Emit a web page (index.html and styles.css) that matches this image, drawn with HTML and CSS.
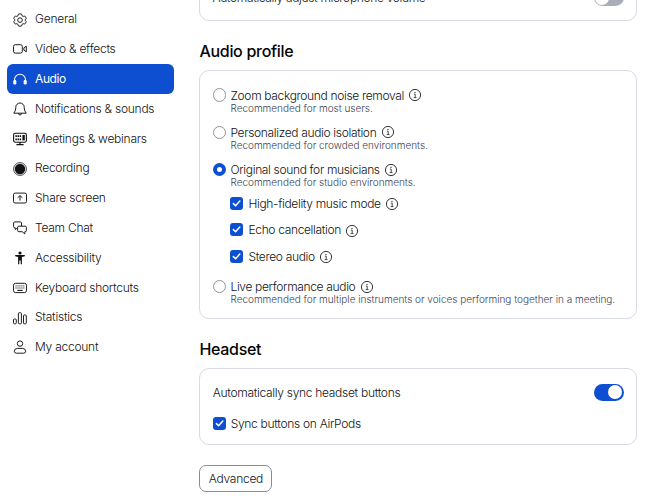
FILE: index.html
```html
<!DOCTYPE html>
<html lang="en">
<head>
<meta charset="utf-8">
<title>Settings - Audio</title>
<link rel="stylesheet" href="styles.css">
</head>
<body>
<svg class="defs" width="0" height="0" aria-hidden="true">
  <symbol id="info" viewBox="0 0 12 12"><circle cx="6" cy="6" r="5.6" fill="none" stroke="currentColor" stroke-width=".85"/><path d="M4.9 5.1h1.3v3.4M4.7 8.6h2.8" fill="none" stroke="currentColor" stroke-width=".75"/><circle cx="6" cy="3.3" r=".65" fill="currentColor"/></symbol>
  <symbol id="check" viewBox="0 0 13 13"><path d="M3.4 6.6 5.6 8.8 9.8 4.1" fill="none" stroke="#fff" stroke-width="1.5" stroke-linecap="round" stroke-linejoin="round"/></symbol>
</svg>
<div class="app">
  <nav class="sidebar">
    <a class="item"><svg class="icon" viewBox="0 0 14 14"><path d="M5.4 1.2Q7 .4 8.6 1.2L9 2.7 10.2 3.4 11.7 3Q13 4 13.2 5.7L12.1 6.9V7.3L13.2 8.4Q12.8 10.1 11.6 11.1L10.2 10.7 9 11.4 8.6 12.9Q7 13.6 5.4 12.9L5 11.4 3.8 10.7 2.4 11.1Q1.1 10 .8 8.4L1.9 7.3V6.8L.8 5.7Q1.1 4 2.4 3L3.8 3.4 5 2.7Z"/><circle cx="7" cy="7.1" r="2.3"/></svg><span>General</span></a>
    <a class="item"><svg class="icon" viewBox="0 0 14 14"><rect x=".5" y="2.7" width="8.8" height="8.4" rx="1.8"/><path d="M10.9 5.8 13.3 4.2V9.8L10.9 8.2Z"/></svg><span>Video &amp; effects</span></a>
    <a class="item active"><svg class="icon" viewBox="0 0 14 14"><path d="M1.5 10V7.7a5.5 5.5 0 0 1 11 0V10" stroke-width="1.1"/><rect x=".3" y="8" width="3" height="4.6" rx="1.3" class="solid"/><rect x="10.7" y="8" width="3" height="4.6" rx="1.3" class="solid"/></svg><span>Audio</span></a>
    <a class="item"><svg class="icon" viewBox="0 0 14 14"><path d="M.8 11.2Q2.7 9 2.8 6V5.2a4.2 4.2 0 0 1 8.4 0V6q.1 3 2 5.2ZM5.2 11.3q.4 1.7 1.8 1.7t1.8-1.7"/></svg><span>Notifications &amp; sounds</span></a>
    <a class="item"><svg class="icon" viewBox="0 0 14 14"><rect x=".6" y="1.3" width="12.8" height="8.9" rx="1.6" stroke-width="1.1"/><path d="M2.4 4.1H8.2M2.4 7.3H8.2" stroke-width="1.7" stroke-dasharray="1.5 .6"/><path d="M10.6 3v5.4" stroke-width="2.4"/><path d="M7 10v2.2M3.4 12.7h7.2" stroke-width="1.2"/></svg><span>Meetings &amp; webinars</span></a>
    <a class="item"><svg class="icon" viewBox="0 0 14 14"><circle cx="7" cy="7" r="6.4" stroke-width=".8"/><circle cx="7" cy="7" r="5.2" class="solid"/></svg><span>Recording</span></a>
    <a class="item"><svg class="icon" viewBox="0 0 14 14"><rect x=".5" y="2.1" width="13" height="9.9" rx="1.6"/><path d="M7 9.6V4.8M4.6 6.8 7 4.6 9.4 6.8"/></svg><span>Share screen</span></a>
    <a class="item"><svg class="icon" viewBox="0 0 14 14"><path d="M4.5 6.9 2.3 8.5V6.8H1.8Q.6 6.8.6 5.6V2Q.6.9 1.8.9H7.3Q8.5.9 8.5 2V5.2M5.8 5.2H12.2Q13.4 5.2 13.4 6.4V9.5Q13.4 10.7 12.2 10.7H11.8V12.9L9.2 10.7H5.8Q4.6 10.7 4.6 9.5V6.4Q4.6 5.2 5.8 5.2Z"/></svg><span>Team Chat</span></a>
    <a class="item"><svg class="icon" viewBox="0 0 14 14"><circle cx="7" cy="2" r="1.6" class="solid"/><path class="solid" d="M2.2 4.1H11.8V5.3L8.9 5.9V13.2H7.7V9.5H6.3V13.2H5.1V5.9L2.2 5.3Z"/></svg><span>Accessibility</span></a>
    <a class="item"><svg class="icon" viewBox="0 0 14 14"><rect x=".5" y="2.3" width="13" height="9.3" rx="2"/><path d="M2.5 4.9h9M2.5 7h9" stroke-dasharray="1.1 .85"/><path d="M4.4 9.4h5.2" stroke-width="1.1"/></svg><span>Keyboard shortcuts</span></a>
    <a class="item"><svg class="icon" viewBox="0 0 14 14"><rect x=".5" y="8" width="2.8" height="4.8" rx=".9"/><rect x="5.4" y="1.7" width="3" height="11.1" rx=".9"/><rect x="10.5" y="4" width="2.8" height="8.8" rx=".9"/></svg><span>Statistics</span></a>
    <a class="item"><svg class="icon" viewBox="0 0 14 14"><circle cx="7" cy="3.6" r="2.7"/><path d="M1.3 11.2Q1.5 8.4 4.5 8.4H9.5Q12.5 8.4 12.7 11.2 12.6 13.2 10.7 13.2H3.3Q1.4 13.2 1.3 11.2Z"/></svg><span>My account</span></a>
  </nav>
  <main class="content">
    <section class="card card-mic">
      <span>Automatically adjust microphone volume</span><span class="toggle off"></span>
    </section>
    <h2 class="title">Audio profile</h2>
    <section class="card card-profile">
      <div class="option">
        <i class="radio"></i>
        <div><div class="label"><span>Zoom background noise removal</span><svg class="info"><use href="#info"/></svg></div><p class="hint">Recommended for most users.</p></div>
      </div>
      <div class="option">
        <i class="radio"></i>
        <div><div class="label"><span>Personalized audio isolation</span><svg class="info"><use href="#info"/></svg></div><p class="hint">Recommended for crowded environments.</p></div>
      </div>
      <div class="option music">
        <i class="radio selected"></i>
        <div>
          <div class="label"><span>Original sound for musicians</span><svg class="info"><use href="#info"/></svg></div><p class="hint">Recommended for studio environments.</p>
          <div class="sub"><svg class="check"><use href="#check"/></svg><span>High-fidelity music mode</span><svg class="info"><use href="#info"/></svg></div>
          <div class="sub"><svg class="check"><use href="#check"/></svg><span>Echo cancellation</span><svg class="info"><use href="#info"/></svg></div>
          <div class="sub"><svg class="check"><use href="#check"/></svg><span>Stereo audio</span><svg class="info"><use href="#info"/></svg></div>
        </div>
      </div>
      <div class="option">
        <i class="radio"></i>
        <div><div class="label"><span>Live performance audio</span><svg class="info"><use href="#info"/></svg></div><p class="hint">Recommended for multiple instruments or voices performing together in a meeting.</p></div>
      </div>
    </section>
    <h2 class="title">Headset</h2>
    <section class="card card-headset">
      <div class="setting"><span>Automatically sync headset buttons</span><span class="toggle"></span></div>
      <div class="airpods"><svg class="check"><use href="#check"/></svg><span>Sync buttons on AirPods</span></div>
    </section>
    <button class="advanced">Advanced</button>
  </main>
</div>
</body>
</html>
```
FILE: styles.css
```css
* { box-sizing: border-box; }
body {
  margin: 0;
  height: 500px;
  overflow: hidden;
  background: #fff;
  color: #111214;
  font: 300 12px/15px Inter, "Liberation Sans", sans-serif;
  letter-spacing: -0.25px;
}
.defs { display: block; height: 0; }
.app { display: flex; height: 500px; overflow: hidden; white-space: nowrap; }
.sidebar { width: 199.4px; flex: none; padding: 4.5px 25.4px 0 7px; }
.item {
  display: flex;
  align-items: center;
  gap: 8px;
  height: 29.8px;
  padding: 0 6px 1px;
  border-radius: 6px;
}
.item.active { background: #0e4fd1; color: #fff; font-weight: 400; }
.item.active span { letter-spacing: -0.4px; }
.icon {
  width: 14px;
  height: 14px;
  flex: none;
  position: relative;
  top: .7px;
  fill: none;
  stroke: currentColor;
  stroke-width: .95;
  stroke-linejoin: round;
}
.icon .solid { fill: currentColor; stroke: none; }
.content { width: 437.6px; flex: none; letter-spacing: -0.34px; }
.card { border: 1px solid #d8dae4; border-radius: 10px; }
.card-mic {
  display: flex;
  align-items: center;
  justify-content: space-between;
  height: 48px;
  margin-top: -27px;
  padding: 1px 12px 0;
}
.title { margin: 0; height: 49px; font-size: 16px; font-weight: 500; line-height: 60px; color: #050505; letter-spacing: -0.29px; }
.card-profile { height: 249px; padding: 16.6px 12.3px 0; }
.option { display: flex; gap: 4.2px; height: 37.3px; }
.option.music { height: 116.9px; }
.radio { flex: none; width: 13.6px; height: 13.6px; margin-top: .7px; border: 1px solid #8f939d; border-radius: 50%; }
.radio.selected { border: 4px solid #0e4fd1; }
.label { display: flex; align-items: center; gap: 5.5px; }
.info { width: 12px; height: 12px; flex: none; overflow: visible; }
.hint { margin: 0; font-size: 10px; line-height: 11px; color: #3c4252; letter-spacing: -0.02px; }
.sub { display: flex; align-items: center; gap: 5px; height: 26.5px; }
.sub:nth-child(3) { margin-top: 2px; }
.sub .info { position: relative; top: 1px; }
.check { width: 13px; height: 13px; flex: none; border-radius: 3px; background: #0e4fd1; }
.card-headset { height: 77px; padding: 14px 12px 0 12.3px; letter-spacing: -0.3px; }
.setting { display: flex; align-items: center; justify-content: space-between; height: 18px; }
.toggle { display: flex; justify-content: flex-end; width: 30px; height: 17px; padding: 1.5px; border-radius: 9px; background: #0e4fd1; }
.toggle::before { content: ""; width: 14px; height: 14px; border-radius: 50%; background: #fff; }
.toggle.off { justify-content: flex-start; background: #abadb8; }
.airpods { display: flex; align-items: center; gap: 5px; margin-top: 15px; }
.advanced {
  display: block;
  width: 73px;
  height: 27px;
  margin-top: 19.5px;
  padding: 0;
  border: 1px solid #868c9b;
  border-radius: 7px;
  background: #fff;
  color: #111214;
  font: inherit;
  letter-spacing: -0.25px;
}
```
